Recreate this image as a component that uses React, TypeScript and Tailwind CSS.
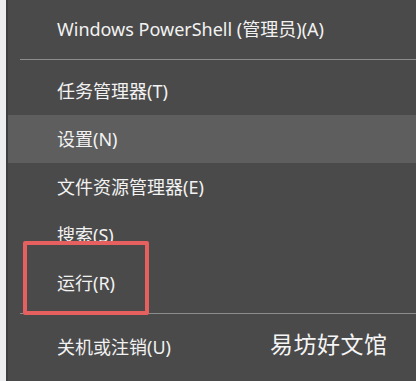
import React from "react";

type MenuItem = {
  label: string;
  active?: boolean;
};

const topItems: MenuItem[] = [
  { label: "任务管理器(T)" },
  { label: "设置(N)", active: true },
  { label: "文件资源管理器(E)" },
  { label: "搜索(S)" },
  { label: "运行(R)" },
];

function Row({ label, active }: MenuItem) {
  return (
    <div
      className={`flex h-[48px] items-center pl-[49px] text-[18px] text-[#f2f2f2] ${
        active ? "bg-[#5e5e5e]" : ""
      }`}
    >
      {label}
    </div>
  );
}

function Divider() {
  return <div className="ml-[12px] h-px bg-[#8c8c8c]" />;
}

export default function App() {
  return (
    <div
      className="relative flex h-[381px] w-[416px] overflow-hidden bg-[#4a4a4a]"
      style={{ fontFamily: '"Noto Sans", "Noto Sans CJK SC", sans-serif' }}
    >
      <div className="w-[6px] shrink-0 bg-[#eceef0]" />
      <div className="w-[2px] shrink-0 bg-[#3e3e3e]" />

      <div className="flex flex-1 flex-col pt-[5px]">
        <Row label="Windows PowerShell (管理员)(A)" />
        <div className="pt-[6px] pb-[7px]">
          <Divider />
        </div>
        {topItems.map((item) => (
          <Row key={item.label} {...item} />
        ))}
        <div className="pt-[6px] pb-[9px]">
          <Divider />
        </div>
        <Row label="关机或注销(U)" />
      </div>

      {/* annotation box around 运行 */}
      <div className="absolute left-[23px] top-[241px] h-[74px] w-[126px] rounded-[2px] border-4 border-[#e5605f]" />

      {/* watermark */}
      <div className="absolute left-[270px] top-[333px] text-[23px] leading-none tracking-[0.5px] text-[#f5f5f5]">
        易坊好文馆
      </div>
    </div>
  );
}
